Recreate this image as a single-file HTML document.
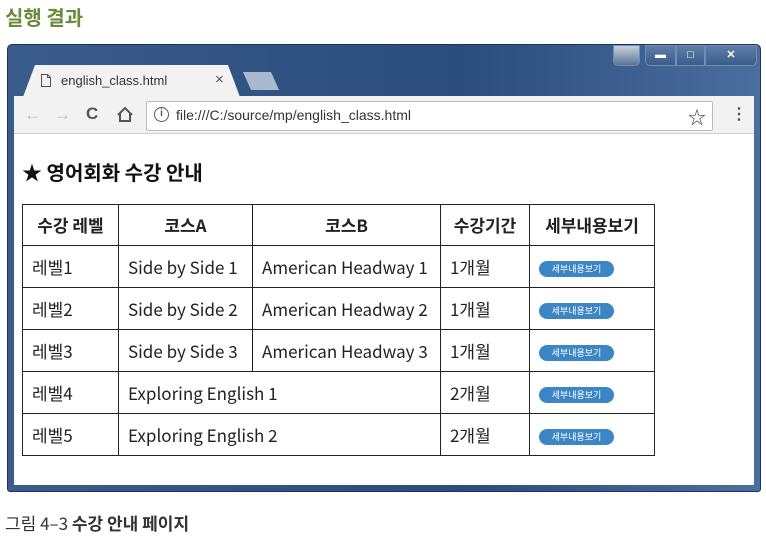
<!DOCTYPE html>
<html><head><meta charset="utf-8"><style>
*{margin:0;padding:0;box-sizing:border-box}
body{width:766px;height:540px;background:#fff;position:relative;overflow:hidden;font-family:"Liberation Sans","Noto Sans CJK KR",sans-serif}
.abs{position:absolute}
#title{left:5px;top:2px;font-size:20px;font-weight:bold;color:#6b8b3b;font-family:"Noto Sans CJK KR",sans-serif;line-height:30px}
#frame{left:7px;top:44px;width:754px;height:448px;background:linear-gradient(90deg,#3a5c8c,#2b4d7d 60%,#4a6e9e);border:1px solid #1d3558;border-radius:5px 5px 3px 3px}
#tab{left:23px;top:65px;width:217px;height:32px;background:#f2f2f2;clip-path:polygon(12px 0,205px 0,217px 32px,0 32px)}
#tab2{left:243px;top:72px;width:36px;height:18px;background:#a9b9cf;clip-path:polygon(0 0,28px 0,36px 18px,8px 18px)}
#toolbar{left:14px;top:96px;width:740px;height:38px;background:#f2f2f2;border-bottom:1px solid #ccc}
#addr{left:146px;top:101px;width:567px;height:30px;background:#fff;border:1px solid #bbb;border-radius:2px}
#content{left:14px;top:134px;width:740px;height:351px;background:#fff}
table{position:absolute;left:22px;top:204px;width:632px;border-collapse:collapse;font-size:17px;color:#222;font-family:"Noto Sans CJK KR",sans-serif;table-layout:fixed}
td,th{border:1px solid #222;height:42px;padding:0 0 0 9px;white-space:nowrap;line-height:20px;vertical-align:middle;overflow:hidden}
th{font-weight:bold;text-align:center;height:41px;padding:0}
td{text-align:left}
.btn{display:inline-block;background:#3d86c6;color:#fff;font-size:9px;border-radius:8px;width:75px;height:16px;line-height:16px;text-align:center;vertical-align:middle}
.wb{top:45px;height:21px;border:1px solid #6f8db5;background:linear-gradient(#5f7ea8,#3c5c8a);color:#fff;font-size:11px;text-align:center;line-height:18px;font-weight:bold}
</style></head><body>
<div class="abs" id="title">실행 결과</div>
<div class="abs" id="frame"></div>
<div class="abs wb" style="left:613px;width:27px;border-radius:0 0 5px 5px;background:linear-gradient(#c8d2de,#5d7394)"></div>
<div class="abs wb" style="left:645px;width:31px;border-radius:0 0 0 5px">▬</div>
<div class="abs wb" style="left:676px;width:29px">□</div>
<div class="abs wb" style="left:705px;width:52px;border-radius:0 0 5px 0">✕</div>
<div class="abs" id="tab"></div>
<div class="abs" id="tab2"></div>
<svg class="abs" style="left:40px;top:73px" width="12" height="15"><path d="M1.5 1.5h6l3 3v9h-9z M7.5 1.5v3h3" fill="none" stroke="#555" stroke-width="1"/></svg>
<div class="abs" style="left:61px;top:73px;font-size:13px;color:#333">english_class.html</div>
<div class="abs" style="left:215px;top:71px;font-size:15px;color:#555">×</div>
<div class="abs" id="toolbar"></div>
<div class="abs" style="left:24px;top:105px;font-size:17px;color:#bbb">←</div>
<div class="abs" style="left:54px;top:105px;font-size:17px;color:#bbb">→</div>
<div class="abs" style="left:86px;top:104px;font-size:17px;color:#555;font-weight:bold">C</div>
<svg class="abs" style="left:116px;top:106px" width="18" height="17"><path d="M2 9L9 2l7 7M4 7v8h10V7" fill="none" stroke="#555" stroke-width="2"/></svg>
<div class="abs" id="addr"></div>
<div class="abs" style="left:154px;top:107px;width:15px;height:15px;border:1.5px solid #555;border-radius:50%;font-size:10px;text-align:center;line-height:12px;color:#555;font-weight:bold">i</div>
<div class="abs" style="left:176px;top:107px;font-size:14px;color:#333">file:///C:/source/mp/english_class.html</div>
<div class="abs" style="left:688px;top:104px;font-size:18px;color:#444">☆</div>
<div class="abs" style="left:731px;top:104px;font-size:16px;color:#555;font-weight:bold">⋮</div>
<div class="abs" id="content"></div>
<div class="abs" style="left:22px;top:158px;font-size:20px;font-weight:bold;color:#111;font-family:'Noto Sans CJK KR',sans-serif;line-height:28px">★ 영어회화 수강 안내</div>
<table>
<colgroup><col style="width:96px"><col style="width:134px"><col style="width:188px"><col style="width:89px"><col style="width:125px"></colgroup>
<tr><th>수강 레벨</th><th>코스A</th><th>코스B</th><th>수강기간</th><th>세부내용보기</th></tr>
<tr><td>레벨1</td><td>Side by Side 1</td><td>American Headway 1</td><td>1개월</td><td><span class="btn">세부내용보기</span></td></tr>
<tr><td>레벨2</td><td>Side by Side 2</td><td>American Headway 2</td><td>1개월</td><td><span class="btn">세부내용보기</span></td></tr>
<tr><td>레벨3</td><td>Side by Side 3</td><td>American Headway 3</td><td>1개월</td><td><span class="btn">세부내용보기</span></td></tr>
<tr><td>레벨4</td><td colspan="2">Exploring English 1</td><td>2개월</td><td><span class="btn">세부내용보기</span></td></tr>
<tr><td>레벨5</td><td colspan="2">Exploring English 2</td><td>2개월</td><td><span class="btn">세부내용보기</span></td></tr>
</table>
<div class="abs" style="left:5px;top:510px;font-size:17px;color:#333;font-family:'Noto Sans CJK KR',sans-serif;line-height:26px">그림 4–3 <b>수강 안내 페이지</b></div>
</body></html>
